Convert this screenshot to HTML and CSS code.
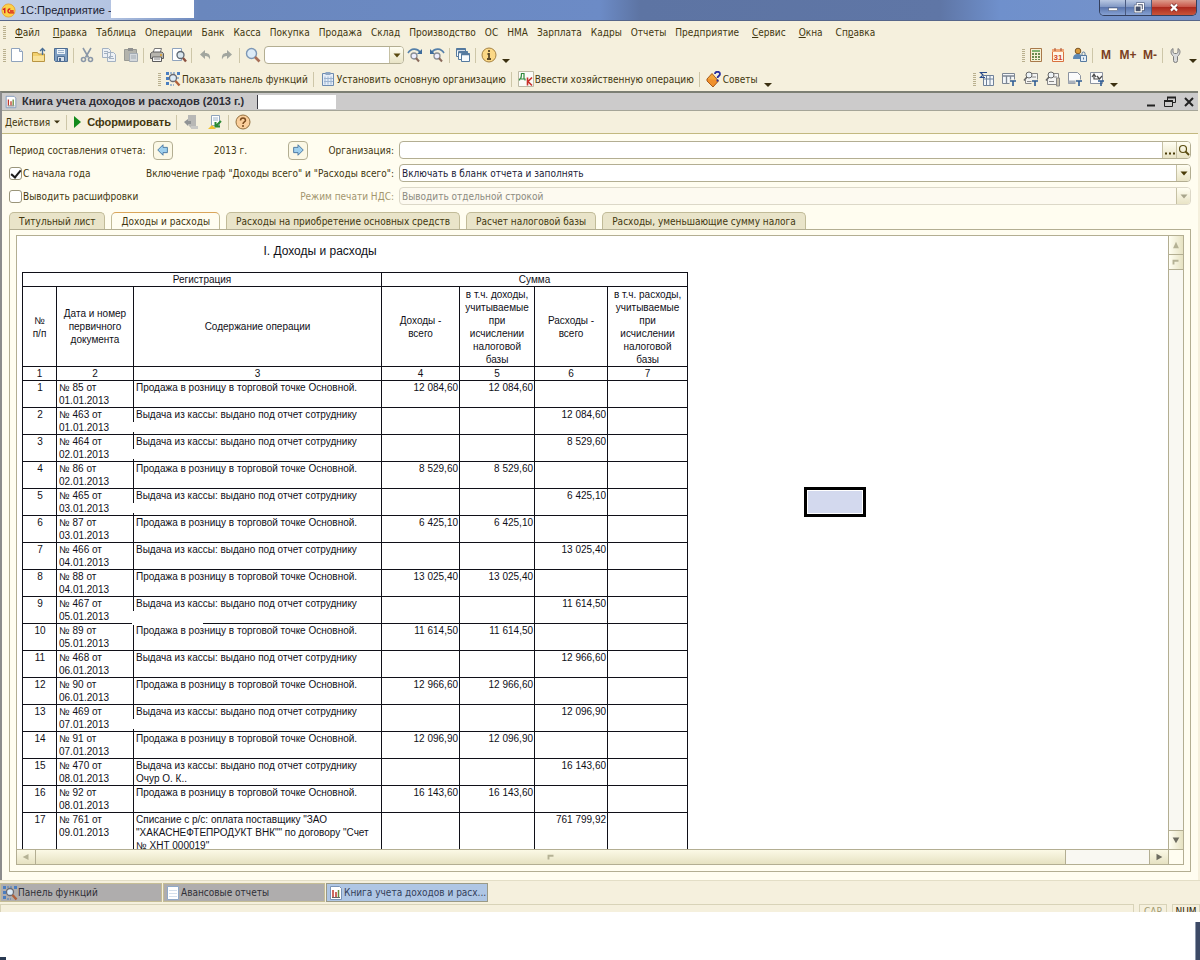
FILE: index.html
```html
<!DOCTYPE html>
<html lang="ru">
<head>
    <meta charset="UTF-8">
    <meta name="viewport" content="width=device-width, initial-scale=1.0">
    <title>1С:Предприятие</title>
    <link rel="stylesheet" href="styles.css">
</head>
<body>
    <header class="titlebar">
        <svg class="logo" viewBox="0 0 16 16"><circle cx="8" cy="8" r="7" fill="#fbd24a" stroke="#e9a53a"/><path d="M2 7l2-1v5M10 6.500a2 2 0 1 0-1 4h5M9.500 8.500h4" fill="none" stroke="#d8231c" stroke-width="1.500"/></svg>
        <h1>1С:Предприятие -</h1>
        <span class="title-blank"></span>
        <div class="window-buttons">
            <button type="button" aria-label="Свернуть"><svg viewBox="0 0 16 16"><rect x="3" y="8" width="10" height="3" fill="#fff" stroke="#44506b" stroke-width=".6"/></svg></button>
            <button type="button" aria-label="Развернуть"><svg viewBox="0 0 16 16"><path d="M6 5V3h7v7h-2M3.500 5.500h7v7h-7zM6 8h2v2H6z" fill="none" stroke="#44506b" stroke-width="2.600"/><path d="M6 5V3h7v7h-2M3.500 5.500h7v7h-7z" fill="none" stroke="#fff" stroke-width="1.400"/></svg></button>
            <button type="button" class="close" aria-label="Закрыть"><svg viewBox="0 0 16 16"><path d="M4.500 4l7 7M11.500 4l-7 7" stroke="#6b2b2b" stroke-width="4"/><path d="M4.500 4l7 7M11.500 4l-7 7" stroke="#fff" stroke-width="2.500"/></svg></button>
        </div>
    </header>

    <nav class="menu">
        <span class="grip"></span>
        <a href="#" class="wide"><u>Ф</u>айл</a>
        <a href="#"><u>П</u>равка</a>
        <a href="#">Таблица</a>
        <a href="#">Операции</a>
        <a href="#">Банк</a>
        <a href="#">Касса</a>
        <a href="#">Покупка</a>
        <a href="#">Продажа</a>
        <a href="#">Склад</a>
        <a href="#">Производство</a>
        <a href="#">ОС</a>
        <a href="#">НМА</a>
        <a href="#">Зарплата</a>
        <a href="#">Кадры</a>
        <a href="#">Отчеты</a>
        <a href="#" class="wide">Предприятие</a>
        <a href="#" class="wide"><u>С</u>ервис</a>
        <a href="#" class="wide"><u>О</u>кна</a>
        <a href="#">Сп<u>р</u>авка</a>
    </nav>

    <div class="toolbar">
        <span class="grip"></span>
        <button type="button" aria-label="Новый"><svg viewBox="0 0 16 16"><path d="M2.500 1.500h8l3 3v10h-11z" fill="#fff" stroke="#8fa3bd"/><path d="M10.500 1.500v3h3" fill="#dfe8f3" stroke="#8fa3bd"/></svg></button>
        <button type="button" aria-label="Открыть"><svg viewBox="0 0 16 16"><path d="M1.500 5.500h5l1 1.500h6v7.500h-12z" fill="#f3d16e" stroke="#b99542"/><path d="M2 9h11v5H2z" fill="#f9e29a"/><path d="M11.500 8V2M9 4l2.500-2.500L14 4" fill="none" stroke="#4a6f96" stroke-width="1.300"/></svg></button>
        <button type="button" aria-label="Сохранить"><svg viewBox="0 0 16 16"><path d="M1.500 1.500h13v13h-12l-1-1z" fill="#7f9fc2" stroke="#4d6c92"/><path d="M4 2h8v5H4z" fill="#eef4fa"/><path d="M5 3.500h6M5 5.500h6" stroke="#9db4cd"/><path d="M4.500 9.500h7v5h-7z" fill="#d5dfeb" stroke="#4d6c92"/><path d="M6 11h2v3H6z" fill="#4d6c92"/></svg></button>
        <span class="sep"></span>
        <button type="button" aria-label="Вырезать"><svg viewBox="0 0 16 16" fill="none" stroke="#8a97a8" stroke-width="1.600"><path d="M4 1l5.500 9.500M12 1L6.500 10.500"/><circle cx="4.500" cy="12.500" r="2"/><circle cx="11.500" cy="12.500" r="2"/></svg></button>
        <button type="button" aria-label="Копировать"><svg viewBox="0 0 16 16"><path d="M1.500 1.500h6l2 2v7h-8zM6.500 5.500h6l2 2v7h-8z" fill="#edf1f5" stroke="#a3b1c2"/><path d="M3 4.500h4M3 6.500h3M8 9.500h4M8 11.500h5" stroke="#a3b1c2"/></svg></button>
        <button type="button" aria-label="Вставить"><svg viewBox="0 0 16 16"><path d="M1.500 2.500h12v11h-12z" fill="#b3b3ac" stroke="#999a94"/><path d="M5 1h5v3H5z" fill="#8f9090"/><path d="M6.500 6.500h8v8h-8z" fill="#d4d8dc" stroke="#a3abb3"/><path d="M8 9h5M8 11h5" stroke="#a3abb3"/></svg></button>
        <span class="sep"></span>
        <button type="button" aria-label="Печать"><svg viewBox="0 0 16 16"><path d="M4 6l1.500-4.500h7L11 6" fill="#fff" stroke="#777"/><path d="M1.500 6.500l2-1.500h9.500l1.500 1.500v5h-13z" fill="#b7b5ae" stroke="#5c5c5c"/><path d="M3.500 10h9v4.500h-9z" fill="#f5f5f5" stroke="#5c5c5c"/><path d="M5 12h6" stroke="#888"/><path d="M11 8h2" stroke="#e3a223" stroke-width="1.500"/></svg></button>
        <button type="button" aria-label="Просмотр"><svg viewBox="0 0 16 16"><path d="M1.500 1.500h9v12h-9z" fill="#fff" stroke="#8fa3bd"/><circle cx="9.500" cy="8" r="3.500" fill="#d9e6ee" stroke="#5c6670" stroke-width="1.300"/><path d="M12 11l3 3.500" stroke="#8a5040" stroke-width="2.400"/></svg></button>
        <span class="sep"></span>
        <button type="button" aria-label="Отменить"><svg viewBox="0 0 16 16"><path d="M3 7.500L8 3v3c4 0 5.500 2 5 6.500C12 10 10.500 9 8 9v3z" fill="#a2a69f"/></svg></button>
        <button type="button" aria-label="Вернуть"><svg viewBox="0 0 16 16"><path d="M13 7.500L8 3v3c-4 0-5.500 2-5 6.500C4 10 5.500 9 8 9v3z" fill="#a2a69f"/></svg></button>
        <span class="sep"></span>
        <button type="button" aria-label="Найти"><svg viewBox="0 0 16 16"><circle cx="6.500" cy="6.500" r="5" fill="#dcebf7" stroke="#7d97b5" stroke-width="1.400"/><path d="M10 10l4.500 4.500" stroke="#a86f58" stroke-width="2.600"/></svg></button>
        <span class="field search">
            <input type="text" aria-label="Поиск">
            <button type="button" aria-label="История поиска"><svg viewBox="0 0 12 12"><path d="M2.500 4.500h7L6 8.500z" fill="#5a4a10"/></svg></button>
        </span>
        <button type="button" aria-label="Найти далее"><svg viewBox="0 0 16 16"><path d="M1 6c3-5 9-5 12-1" fill="none" stroke="#5580aa" stroke-width="1.600"/><path d="M15 2v5h-5z" fill="#3f6c9c"/><circle cx="7" cy="9" r="3" fill="#eef" stroke="#8a8f96" stroke-width="1.300"/><path d="M9 11l3 3.500" stroke="#8a6a5c" stroke-width="2"/></svg></button>
        <button type="button" aria-label="Найти ранее"><svg viewBox="0 0 16 16"><path d="M15 6C12 1 6 1 3 5" fill="none" stroke="#5580aa" stroke-width="1.600"/><path d="M1 2v5h5z" fill="#3f6c9c"/><circle cx="8" cy="9" r="3" fill="#eef" stroke="#8a8f96" stroke-width="1.300"/><path d="M10 11l3 3.500" stroke="#8a6a5c" stroke-width="2"/></svg></button>
        <span class="sep"></span>
        <button type="button" aria-label="Окна"><svg viewBox="0 0 16 16" fill="#f7fafc" stroke="#557a9f"><path d="M1.500 1.500h9v8h-9z"/><path d="M3.500 4.500h9v8h-9z"/><path d="M6.500 6.500h8v8h-8z"/><path d="M1 2.500h10M4 5.500h9M7 7.500h8" stroke-width="1.500"/></svg></button>
        <span class="sep"></span>
        <button type="button" aria-label="Справка"><svg viewBox="0 0 16 16"><circle cx="8" cy="8" r="7" fill="#fbd886" stroke="#a58242"/><path d="M8 3v2M6.500 7H8v5M6 12h4" stroke="#5c4a28" stroke-width="1.800" fill="none"/></svg></button>
        <span class="more"></span>

        <div class="group-right">
            <span class="grip"></span>
            <button type="button" aria-label="Калькулятор"><svg viewBox="0 0 16 16"><path d="M2.500 1.500h11v13h-11z" fill="#f7f0d4" stroke="#a8794a"/><path d="M4 3h8v2H4z" fill="#7fb26e"/><path d="M5 6v7M8 6v7M11 6v7" stroke="#6b8a4f" stroke-width="2" stroke-dasharray="2 1"/></svg></button>
            <button type="button" aria-label="Календарь"><svg viewBox="0 0 16 16"><path d="M2.500 2.500h11v12h-11z" fill="#fff6e6" stroke="#d9713e"/><path d="M2 2h12v3H2z" fill="#f0a878"/><path d="M5 1v3M11 1v3" stroke="#a5492b"/><text x="8" y="13" class="icon-day">31</text></svg></button>
            <button type="button" aria-label="Пользователи"><svg viewBox="0 0 16 16"><circle cx="6" cy="4" r="2.800" fill="#d99a3c" stroke="#7a5424"/><path d="M1 12c0-4 2-5 5-5s4 1 4 5z" fill="#5c88b5"/><path d="M8.500 8.500h6v6h-6z" fill="#e5eef6" stroke="#55799f"/><path d="M10 8V6.500a1.500 1.500 0 0 1 3 0V8" fill="none" stroke="#55799f"/><path d="M11.500 10.500v2" stroke="#55799f"/></svg></button>
            <span class="sep"></span>
            <button type="button" class="memory">M</button>
            <button type="button" class="memory">M+</button>
            <button type="button" class="memory">M-</button>
            <span class="sep"></span>
            <button type="button" aria-label="Настройка"><svg viewBox="0 0 16 16"><path d="M5 1.500v4l1.500 1h2l1.500-1v-4c2 1 3 4 .5 7l-1 1v4a1.500 1.500 0 0 1-4 0v-4l-1-1c-2.500-3-1.500-6 .5-7z" fill="#d9dadb" stroke="#7c7c7c"/></svg></button>
            <span class="more"></span>
        </div>
    </div>

    <div class="toolbar toolbar-commands">
        <span class="grip"></span>
        <button type="button" class="command"><svg viewBox="0 0 16 16"><path d="M1 1h3v3H1zM1 6h3v3H1zM1 11h3v3H1zM12 1h3v3h-3z" fill="#4a7ec0"/><path d="M5 2h6M5 14h4M13 6v3" stroke="#4a7ec0" stroke-dasharray="2 1"/><circle cx="8" cy="7" r="3.500" fill="#dcebf7" stroke="#6a6a72" stroke-width="1.300"/><path d="M10.500 10l4 4.500" stroke="#b0603a" stroke-width="2.400"/></svg>Показать панель функций</button>
        <span class="sep"></span>
        <button type="button" class="command"><svg viewBox="0 0 16 16"><path d="M2.500 2.500h11v12h-11z" fill="#e6eef8" stroke="#6d8bb0"/><path d="M5.500 1h5v3h-5z" fill="#8ea6c4"/><path d="M5 5.500v8M8 5.500v8M11 5.500v8M4 7.500h9M4 10.500h9" stroke="#9db4d1"/></svg>Установить основную организацию</button>
        <span class="sep"></span>
        <button type="button" class="command"><svg viewBox="0 0 16 16"><path d="M.5.500h15v15H.5z" fill="#fbfbf8" stroke="#bdb9a4"/><path d="M1.500 9.500V8h5.500v1.500M2.500 8c1-2 1-4 1-5.500h2.500V8" fill="none" stroke="#2f8a3c" stroke-width="1.200"/><path d="M9.500 6.500v8M14 6.500l-4 4 4 4" fill="none" stroke="#c8312a" stroke-width="1.600"/></svg>Ввести хозяйственную операцию</button>
        <span class="sep"></span>
        <button type="button" class="command"><svg viewBox="0 0 16 16"><path d="M1 8l5-5.500 6 7L7 15z" fill="#f2a53a" stroke="#a85a1c"/><path d="M1 8v2l6 6 5-5.500V9" fill="#f0902c" stroke="#a85a1c"/><path d="M9 3c0-3 5-3 5 0 0 2-2.500 2-2.500 4M11.500 8.500v2" fill="none" stroke="#2a2f9e" stroke-width="1.800"/></svg>Советы</button>
        <span class="more"></span>

        <div class="group-right">
            <span class="grip"></span>
            <button type="button" aria-label="Итоги"><svg viewBox="0 0 16 16"><path d="M4.500 4.500h10v10h-10z" fill="#f4f7fa" stroke="#6f8199"/><path d="M7.500 5v9M11 5v9M5 8h9" stroke="#6f8199"/><path d="M8 1.500H1.500L4 4 1.500 6.500H6" fill="none" stroke="#2b4c8a" stroke-width="1.200"/></svg></button>
            <button type="button" aria-label="Таблица"><svg viewBox="0 0 16 16"><path d="M1.500 2.500h12v10h-12z" fill="#f4f7fa" stroke="#7d8794"/><path d="M2 5h11M5.500 5v7M9.500 5v7" stroke="#7d8794" stroke-width="1.300"/><path d="M8.500 8.500h7v7h-7z" fill="#f6f1dd"/><path d="M9 10h6M12 10v5" stroke="#2f5c94" stroke-width="1.600"/></svg></button>
            <button type="button" aria-label="Поиск в таблице"><svg viewBox="0 0 16 16"><path d="M4.500 2.500h10v10h-12V9" fill="#f4f4f2" stroke="#888"/><path d="M4 10.500h6M9 6h4" stroke="#888"/><circle cx="6" cy="4" r="3" fill="#eef4f8" stroke="#666"/><path d="M4 6L1 9.500" stroke="#666" stroke-width="1.600"/><path d="M8.500 8.500h7v7h-7z" fill="#f6f1dd"/><path d="M9 10h6M12 10v5" stroke="#2f5c94" stroke-width="1.600"/></svg></button>
            <button type="button" aria-label="Поиск"><svg viewBox="0 0 16 16"><path d="M4.500 2.500h9v11h-11V9" fill="#f4f4f2" stroke="#888"/><path d="M4 10.500h5M9 6h3" stroke="#888"/><circle cx="6" cy="4" r="3" fill="#eef4f8" stroke="#666"/><path d="M4 6L1 9.500" stroke="#666" stroke-width="1.600"/><path d="M11.500 7v8h3V7z" fill="#c9c2ad" stroke="#888"/></svg></button>
            <button type="button" aria-label="Текст"><svg viewBox="0 0 16 16"><path d="M1.500 1.500h9l3 3v8h-12z" fill="#fbfbfb" stroke="#8b93a0"/><path d="M1.500 9.500h8v3h-8z" fill="#aab2bd"/><path d="M8.500 8.500h7v7h-7z" fill="#f6f1dd"/><path d="M9 10h6M12 10v5" stroke="#2f5c94" stroke-width="1.600"/></svg></button>
            <button type="button" aria-label="Обновить"><svg viewBox="0 0 16 16"><path d="M1.500 1.500h12v11h-12z" fill="#fbfbfb" stroke="#8b93a0"/><path d="M3 6l2-3 2 3M5 4v4h5M8 5l2.500 3L13 5" fill="none" stroke="#4c4c4c" stroke-width="1.200"/><path d="M9 10h6M12 10v5" stroke="#2f5c94" stroke-width="1.600"/></svg></button>
            <span class="more"></span>
        </div>
    </div>

    <main class="report">
        <div class="report-title">
            <svg class="icon" viewBox="0 0 16 16"><path d="M2.500 1.500h9l2 2v11h-11z" fill="#fff" stroke="#7a94b8"/><path d="M5 5v7M8 7v5" stroke="#c0392b" stroke-width="1.500"/><path d="M10.500 5v7" stroke="#6a8c3a" stroke-width="1.500"/><path d="M4 12.500h8" stroke="#666"/></svg>
            <h2>Книга учета доходов и расходов (2013 г.)</h2>
            <span class="org-blank"></span>
            <div class="report-buttons">
                <button type="button" aria-label="Свернуть окно"><svg viewBox="0 0 14 14"><path d="M3 10.500h8" stroke="#222" stroke-width="2"/></svg></button>
                <button type="button" aria-label="Восстановить окно"><svg viewBox="0 0 14 14" fill="none" stroke="#222"><path d="M4.500 5V2.500h8v5H10M1.500 5.500h8v6h-8z"/><path d="M4 2.500h9M1 6h9" stroke-width="2"/></svg></button>
                <button type="button" aria-label="Закрыть окно"><svg viewBox="0 0 14 14"><path d="M3 3l8 8M11 3l-8 8" stroke="#222" stroke-width="2"/></svg></button>
            </div>
        </div>

        <div class="report-actions">
            <button type="button" class="command">Действия <svg class="caret" viewBox="0 0 8 8"><path d="M1 2.500h6L4 5.500z" fill="#3b3010"/></svg></button>
            <span class="sep"></span>
            <button type="button" class="command run"><svg viewBox="0 0 16 16"><path d="M5 2l7 6-7 6z" fill="#128a1c"/></svg>Сформировать</button>
            <span class="sep"></span>
            <button type="button" aria-label="Восстановить значения"><svg viewBox="0 0 16 16"><path d="M5 1h8v13H8l-3-3z" fill="#b8b8b6"/><path d="M1 8l4-3v2h3v3H5v2z" fill="#8f9294"/><path d="M8 12h7v3H8z" fill="#c9c9c6"/></svg></button>
            <button type="button" aria-label="Сохранить значения"><svg viewBox="0 0 16 16"><path d="M4.500 1.500h8v10h-8z" fill="#fff" stroke="#8fa3bd"/><path d="M6 4h5M6 6h5" stroke="#9db4cd"/><path d="M1 15l4-4 4 4z" fill="#f1c232"/><path d="M14 7l-5 5M8.500 8v4.500H13" fill="none" stroke="#2c8a35" stroke-width="2"/></svg></button>
            <span class="sep"></span>
            <button type="button" aria-label="Справка по отчету"><svg viewBox="0 0 16 16"><circle cx="8" cy="8" r="7" fill="#fbcf9c" stroke="#94703e"/><path d="M5.500 6.500c0-3.500 5-3.500 5 0 0 1.500-2.500 1.500-2.500 3.500M8 11v2" fill="none" stroke="#7a4a1c" stroke-width="1.500"/></svg></button>
        </div>

        <form class="options">
            <div class="option-row">
                <div class="option-left">
                    <span class="period-label">Период составления отчета:</span>
                    <button type="button" class="step" aria-label="Предыдущий период"><svg viewBox="0 0 16 16"><path d="M2 8l6-6v3h5v6H8v3z" fill="#9fd0ee" stroke="#3f6f9c"/></svg></button>
                    <output class="period">2013 г.</output>
                    <button type="button" class="step" aria-label="Следующий период"><svg viewBox="0 0 16 16"><path d="M14 8L8 2v3H3v6h5v3z" fill="#9fd0ee" stroke="#3f6f9c"/></svg></button>
                    <label class="caption" for="org">Организация:</label>
                </div>
                <div class="field">
                    <input type="text" id="org">
                    <button type="button" aria-label="Выбрать"><svg viewBox="0 0 12 12"><path d="M1 9.500h2M5 9.500h2M9 9.500h2" stroke="#4a3c08" stroke-width="2"/></svg></button>
                    <button type="button" aria-label="Открыть организацию"><svg viewBox="0 0 12 12"><circle cx="5" cy="5" r="3.500" fill="none" stroke="#5a4c10" stroke-width="1.200"/><path d="M7.500 7.500L11 11" stroke="#5a4c10" stroke-width="1.800"/></svg></button>
                </div>
            </div>
            <div class="option-row">
                <div class="option-left">
                    <input type="checkbox" id="fromYearStart" checked>
                    <label for="fromYearStart">С начала года</label>
                    <label class="caption" for="totals">Включение граф "Доходы всего" и "Расходы всего":</label>
                </div>
                <div class="field">
                    <select id="totals">
                        <option>Включать в бланк отчета и заполнять</option>
                    </select>
                    <span class="arrow"><svg viewBox="0 0 12 12"><path d="M2.500 4.500h7L6 8.500z" fill="#4a3c08"/></svg></span>
                </div>
            </div>
            <div class="option-row">
                <div class="option-left">
                    <input type="checkbox" id="details">
                    <label for="details">Выводить расшифровки</label>
                    <label class="caption muted" for="vat">Режим печати НДС:</label>
                </div>
                <div class="field disabled">
                    <select id="vat" disabled>
                        <option>Выводить отдельной строкой</option>
                    </select>
                    <span class="arrow"><svg viewBox="0 0 12 12"><path d="M2.500 4.500h7L6 8.500z" fill="#a8a58c"/></svg></span>
                </div>
            </div>
        </form>

        <div class="tabs" role="tablist">
            <button type="button" role="tab">Титульный лист</button>
            <button type="button" role="tab" class="active" aria-selected="true">Доходы и расходы</button>
            <button type="button" role="tab">Расходы на приобретение основных средств</button>
            <button type="button" role="tab">Расчет налоговой базы</button>
            <button type="button" role="tab">Расходы, уменьшающие сумму налога</button>
        </div>

        <section class="panel">
            <div class="sheet-frame">
                <div class="sheet">
                    <table>
                        <caption>I. Доходы и расходы</caption>
                        <colgroup>
                            <col class="c-num"><col class="c-doc"><col class="c-text"><col class="c-income"><col class="c-income-tax"><col class="c-expense"><col class="c-expense-tax">
                        </colgroup>
                        <thead>
                            <tr><th colspan="3">Регистрация</th><th colspan="4">Сумма</th></tr>
                            <tr class="names">
                                <th>№<br>п/п</th>
                                <th>Дата и номер первичного документа</th>
                                <th>Содержание операции</th>
                                <th>Доходы -<br>всего</th>
                                <th>в т.ч. доходы, учитываемые<br>при<br>исчислении<br>налоговой<br>базы</th>
                                <th>Расходы -<br>всего</th>
                                <th>в т.ч. расходы, учитываемые<br>при<br>исчислении<br>налоговой<br>базы</th>
                            </tr>
                            <tr><th>1</th><th>2</th><th>3</th><th>4</th><th>5</th><th>6</th><th>7</th></tr>
                        </thead>
                        <tbody>
                            <tr><td>1</td><td>№ 85 от<br>01.01.2013</td><td>Продажа в розницу в торговой точке Основной.</td><td>12 084,60</td><td>12 084,60</td><td></td><td></td></tr>
                            <tr><td>2</td><td>№ 463 от<br>01.01.2013</td><td>Выдача из кассы: выдано под отчет сотруднику<span class="erased"></span></td><td></td><td></td><td>12 084,60</td><td></td></tr>
                            <tr><td>3</td><td>№ 464 от<br>02.01.2013</td><td>Выдача из кассы: выдано под отчет сотруднику<span class="erased"></span></td><td></td><td></td><td>8 529,60</td><td></td></tr>
                            <tr><td>4</td><td>№ 86 от<br>02.01.2013</td><td>Продажа в розницу в торговой точке Основной.</td><td>8 529,60</td><td>8 529,60</td><td></td><td></td></tr>
                            <tr><td>5</td><td>№ 465 от<br>03.01.2013</td><td>Выдача из кассы: выдано под отчет сотруднику<span class="erased"></span></td><td></td><td></td><td>6 425,10</td><td></td></tr>
                            <tr><td>6</td><td>№ 87 от<br>03.01.2013</td><td>Продажа в розницу в торговой точке Основной.</td><td>6 425,10</td><td>6 425,10</td><td></td><td></td></tr>
                            <tr><td>7</td><td>№ 466 от<br>04.01.2013</td><td>Выдача из кассы: выдано под отчет сотруднику</td><td></td><td></td><td>13 025,40</td><td></td></tr>
                            <tr><td>8</td><td>№ 88 от<br>04.01.2013</td><td>Продажа в розницу в торговой точке Основной.</td><td>13 025,40</td><td>13 025,40</td><td></td><td></td></tr>
                            <tr><td>9</td><td>№ 467 от<br>05.01.2013</td><td>Выдача из кассы: выдано под отчет сотруднику<span class="erased through"></span></td><td></td><td></td><td>11 614,50</td><td></td></tr>
                            <tr><td>10</td><td>№ 89 от<br>05.01.2013</td><td>Продажа в розницу в торговой точке Основной.</td><td>11 614,50</td><td>11 614,50</td><td></td><td></td></tr>
                            <tr><td>11</td><td>№ 468 от<br>06.01.2013</td><td>Выдача из кассы: выдано под отчет сотруднику</td><td></td><td></td><td>12 966,60</td><td></td></tr>
                            <tr><td>12</td><td>№ 90 от<br>06.01.2013</td><td>Продажа в розницу в торговой точке Основной.</td><td>12 966,60</td><td>12 966,60</td><td></td><td></td></tr>
                            <tr><td>13</td><td>№ 469 от<br>07.01.2013</td><td>Выдача из кассы: выдано под отчет сотруднику<span class="erased"></span></td><td></td><td></td><td>12 096,90</td><td></td></tr>
                            <tr><td>14</td><td>№ 91 от<br>07.01.2013</td><td>Продажа в розницу в торговой точке Основной.</td><td>12 096,90</td><td>12 096,90</td><td></td><td></td></tr>
                            <tr><td>15</td><td>№ 470 от<br>08.01.2013</td><td>Выдача из кассы: выдано под отчет сотруднику Очур О. К..</td><td></td><td></td><td>16 143,60</td><td></td></tr>
                            <tr><td>16</td><td>№ 92 от<br>08.01.2013</td><td>Продажа в розницу в торговой точке Основной.</td><td>16 143,60</td><td>16 143,60</td><td></td><td></td></tr>
                            <tr><td>17</td><td>№ 761 от<br>09.01.2013</td><td>Списание с р/с: оплата поставщику "ЗАО "ХАКАСНЕФТЕПРОДУКТ ВНК"" по договору "Счет № ХНТ 000019"</td><td></td><td></td><td>761 799,92</td><td></td></tr>
                        </tbody>
                    </table>
                    <div class="selected-cell"></div>
                </div>
                <div class="scroll-v">
                    <button type="button" aria-label="Вверх"><svg viewBox="0 0 12 12"><path d="M6 2l3.500 8h-7z" fill="#b5b295"/></svg></button>
                    <span class="thumb"><svg viewBox="0 0 8 8"><path d="M2 6V3h4" fill="none" stroke="#b5b295" stroke-width="1.500"/></svg></span>
                    <button type="button" class="last" aria-label="Вниз"><svg viewBox="0 0 12 12"><path d="M2 3h8l-4 7z" fill="#6d6c60"/></svg></button>
                </div>
                <div class="scroll-h">
                    <button type="button" aria-label="Влево"><svg viewBox="0 0 12 12"><path d="M2 6l7-3.500v7z" fill="#b5b295"/></svg></button>
                    <span class="thumb"><svg viewBox="0 0 8 8"><path d="M2 6V3h4" fill="none" stroke="#b5b295" stroke-width="1.500"/></svg></span>
                    <button type="button" class="last" aria-label="Вправо"><svg viewBox="0 0 12 12"><path d="M3 2l7 4-7 4z" fill="#6d6c60"/></svg></button>
                </div>
                <div class="scroll-corner"></div>
            </div>
        </section>
    </main>

    <nav class="window-list">
        <button type="button"><svg viewBox="0 0 16 16"><path d="M1 1h3v3H1zM1 6h3v3H1zM1 11h3v3H1zM12 1h3v3h-3z" fill="#4a7ec0"/><path d="M5 2h6M5 14h4" stroke="#4a7ec0" stroke-dasharray="2 1"/><circle cx="8" cy="7" r="3.500" fill="#dcebf7" stroke="#6a6a72" stroke-width="1.300"/><path d="M10.500 10l4 4.500" stroke="#b0603a" stroke-width="2.400"/></svg>Панель функций</button>
        <button type="button"><svg viewBox="0 0 16 16"><path d="M2.500 1.500h11v13h-11z" fill="#fff" stroke="#8fa9c9"/><path d="M4 5.500h8M4 8.500h8M4 11.500h8" stroke="#d3dfec"/></svg>Авансовые отчеты</button>
        <button type="button" class="active"><svg viewBox="0 0 16 16"><path d="M2.500 1.500h9l2 2v11h-11z" fill="#fff" stroke="#7a94b8"/><path d="M5 5v7M8 7v5" stroke="#c0392b" stroke-width="1.500"/><path d="M10.500 5v7" stroke="#6a8c3a" stroke-width="1.500"/><path d="M4 12.500h8" stroke="#666"/></svg>Книга учета доходов и расх...</button>
    </nav>

    <footer class="status">
        <span class="hint"></span>
        <span class="lock off">CAP</span>
        <span class="lock">NUM</span>
    </footer>
    <div class="below"><span class="edge-left"></span><span class="edge-right"></span></div>
</body>
</html>
```
FILE: styles.css
```css
/* Basic Reset */
* {
    margin: 0;
    padding: 0;
    box-sizing: border-box;
}
body {
    display: flex;
    flex-direction: column;
    height: 100vh;
    overflow: hidden;
    font-family: "DejaVu Sans Condensed", "Liberation Sans", Arial, sans-serif;
    font-size: 10px;
    line-height: 13px;
    color: #42370f;
    background: #f5f0dd;
}
button, input, select {
    font: inherit;
    color: inherit;
    border: none;
    background: none;
}
button {
    display: flex;
    align-items: center;
    justify-content: center;
    cursor: pointer;
    white-space: nowrap;
}
a {
    color: inherit;
    text-decoration: none;
}
svg {
    display: block;
    width: 16px;
    height: 16px;
    flex: none;
}

/* Main window title */
.titlebar {
    display: flex;
    align-items: center;
    flex: none;
    height: 21px;
    border-bottom: 1px solid #56668a;
    background: linear-gradient(to right, #c3d0e6 0, #b4c4e2 110px, #6a87bd 200px, #6c8bc6 600px, #5d74a3 640px, #5f76a6 940px, #6f90cc 1000px, #7793c9 100%);
}
.logo {
    width: 15px;
    height: 15px;
    margin-left: 1px;
}
.titlebar h1 {
    width: 95px;
    padding-left: 4px;
    font: 11px/18px "Liberation Sans", Arial, sans-serif;
    color: #1b2233;
    white-space: nowrap;
}
.title-blank {
    align-self: flex-start;
    width: 83px;
    height: 18px;
    background: #fff;
}
.window-buttons {
    display: flex;
    align-self: flex-start;
    margin-left: auto;
    margin-right: 3px;
    border: 1px solid #34405e;
    border-top: none;
    border-radius: 0 0 5px 5px;
    overflow: hidden;
}
.window-buttons button {
    width: 26px;
    height: 15px;
    border-right: 1px solid #4a5a80;
    background: linear-gradient(#b9c8e2, #8299c5 45%, #5b76ad 50%, #86a1d3);
}
.window-buttons button.close {
    width: 44px;
    border-right: none;
    background: linear-gradient(#dd9c8c, #c9574a 45%, #ac2a1e 50%, #c9543a);
}
.window-buttons svg {
    width: 14px;
    height: 14px;
}

/* Menu and toolbars */
.menu {
    display: flex;
    align-items: center;
    gap: 9px;
    flex: none;
    height: 22px;
    padding-left: 3px;
    white-space: nowrap;
}
.menu .wide {
    margin-right: 4px;
}
.grip {
    flex: none;
    width: 3px;
    height: 13px;
    background: repeating-linear-gradient(#b9b08e 0 1px, transparent 1px 2px);
}
.toolbar {
    display: flex;
    align-items: center;
    flex: none;
    height: 24px;
    padding: 0 2px 0 3px;
}
.toolbar button {
    width: 22px;
    height: 20px;
}
.toolbar .command {
    width: auto;
    gap: 1px;
    padding: 0 4px;
}
.sep {
    flex: none;
    width: 1px;
    height: 15px;
    margin: 0 2px 0 1px;
    background: #cdc6a8;
}
.more {
    width: 11px;
    height: 13px;
}
.more::after {
    content: "";
    display: block;
    margin: 10px 2px 0;
    border: 4px solid transparent;
    border-top-color: #3b3010;
    border-bottom: none;
}
.group-right {
    display: flex;
    align-items: center;
    margin-left: auto;
}
.toolbar-commands {
    padding-left: 158px;
    padding-right: 81px;
}
.toolbar .memory {
    font: bold 12px/13px "Liberation Sans", Arial, sans-serif;
    color: #7a3f22;
}
.icon-day {
    font: bold 8px "Liberation Sans", Arial, sans-serif;
    text-anchor: middle;
    fill: #d1481f;
}

/* Text boxes and drop-downs */
.field {
    display: flex;
    flex: 1;
    min-width: 0;
    height: 18px;
    border: 1px solid #b3ae92;
    border-radius: 4px;
    background: #fff;
    overflow: hidden;
}
.field input, .field select {
    flex: 1;
    min-width: 0;
    padding: 0 2px;
    color: #1b1b38;
    appearance: none;
    outline: none;
}
.field button, .field .arrow {
    display: flex;
    align-items: center;
    justify-content: center;
    flex: none;
    width: 14px;
    height: 16px;
    border-left: 1px solid #c6c1a4;
    background: linear-gradient(#fffef2, #e9e4c6);
}
.field svg {
    width: 12px;
    height: 12px;
}
.field.disabled {
    border-color: #dcd8c8;
    background: #fdfaf0;
}
.field.disabled select {
    color: #8c8a80;
    opacity: 1;
}
.field.search {
    flex: none;
    width: 140px;
}

/* Report window */
.report {
    display: flex;
    flex-direction: column;
    flex: 1;
    min-height: 0;
    margin-right: 2px;
    border-top: 2px solid #7c7f74;
    border-left: 2px solid #8c8c8c;
    background: #fffdf0;
}
.report-title {
    display: flex;
    align-items: center;
    flex: none;
    height: 18px;
    padding: 0 2px;
    border-bottom: 1px solid #a5a598;
    background: #cccbcb;
}
.report-title .icon {
    width: 14px;
    height: 14px;
    margin-right: 4px;
}
.report-title h2 {
    font: bold 11px/13px "Liberation Sans", Arial, sans-serif;
    color: #2d2d35;
    white-space: nowrap;
}
.org-blank {
    width: 79px;
    height: 14px;
    margin-left: 13px;
    border-left: 1px solid #3c3c44;
    background: #fff;
}
.report-buttons {
    display: flex;
    gap: 5px;
    margin-left: auto;
}
.report-buttons svg {
    width: 14px;
    height: 14px;
}
.report-actions {
    display: flex;
    align-items: center;
    flex: none;
    height: 23px;
    padding-left: 3px;
    border-bottom: 1px solid #c3b97f;
    background: #f5f0dd;
}
.report-actions button {
    width: 24px;
}
.report-actions .command {
    width: auto;
    padding-right: 4px;
}
.caret {
    width: 8px;
    height: 8px;
    margin-left: 3px;
}
.report-actions .run {
    gap: 2px;
    font: bold 11px/13px "Liberation Sans", Arial, sans-serif;
}

/* Report options */
.options {
    display: flex;
    flex-direction: column;
    flex: none;
    gap: 5px;
    padding: 7px;
}
.option-row {
    display: flex;
    align-items: center;
    height: 18px;
}
.option-left {
    display: flex;
    align-items: center;
    flex: none;
    width: 390px;
    white-space: nowrap;
}
.caption {
    margin-left: auto;
    padding-right: 5px;
}
.muted {
    color: #a3966f;
}
.period-label {
    width: 144px;
}
.step {
    width: 20px;
    height: 19px;
    border: 1px solid #b3ae92;
    border-radius: 4px;
    background: #fbf8e6;
}
.step svg {
    width: 14px;
    height: 14px;
}
.period {
    width: 115px;
    text-align: center;
}
input[type="checkbox"] {
    display: grid;
    place-items: center;
    width: 13px;
    height: 13px;
    margin-right: 1px;
    border: 1px solid #9a957a;
    border-radius: 3px;
    background: #fff;
    appearance: none;
}
input[type="checkbox"]:checked::after {
    content: "";
    width: 4px;
    height: 8px;
    border: solid #1c1c1c;
    border-width: 0 2px 2px 0;
    transform: rotate(40deg);
}

/* Tabs */
.tabs {
    display: flex;
    align-items: flex-end;
    flex: none;
    gap: 6px;
    padding: 0 7px;
}
.tabs button {
    height: 17px;
    padding: 0 9px;
    border: 1px solid #c1bb98;
    border-bottom: none;
    border-radius: 5px 5px 0 0;
    background: #e9e4c9;
}
.tabs .active {
    height: 18px;
    margin-bottom: -1px;
    border-top-color: #d9a55a;
    background: #fffdf0;
}
.panel {
    display: flex;
    flex: 1;
    min-height: 0;
    margin: 0 7px 8px;
    padding: 5px 6px 6px;
    border: 1px solid #b3ae92;
}
.sheet-frame {
    display: grid;
    grid-template-columns: 1fr 15px;
    grid-template-rows: minmax(0, 1fr) 15px;
    flex: 1;
    min-width: 0;
    border: 1px solid #b3ae92;
    background: #fff;
}
.sheet {
    position: relative;
    overflow: hidden;
    padding: 7px 5px;
    background: #fff;
}

/* Income and expense table */
table {
    width: 665px;
    table-layout: fixed;
    border-collapse: collapse;
    font-family: "Liberation Sans", Arial, sans-serif;
    font-size: 10px;
    color: #101018;
}
caption {
    padding: 1px 70px 14px 0;
    font-size: 12px;
    line-height: 14px;
}
.c-num { width: 34px; }
.c-doc { width: 77px; }
.c-text { width: 248px; }
.c-income { width: 78px; }
.c-income-tax { width: 75px; }
.c-expense { width: 73px; }
.c-expense-tax { width: 80px; }
th, td {
    border: 1px solid #101018;
}
th {
    font-weight: normal;
    text-align: center;
    vertical-align: middle;
}
.names th {
    height: 80px;
    padding: 0 1px;
}
td {
    position: relative;
    padding: 0 1px 0 2px;
    text-align: right;
    vertical-align: top;
}
td:first-child {
    text-align: center;
}
td:nth-child(2), td:nth-child(3) {
    text-align: left;
}
.erased {
    position: absolute;
    left: -2px;
    bottom: 2px;
    width: 60px;
    height: 10px;
    background: #fff;
}
.erased.through {
    bottom: -2px;
    width: 71px;
    height: 14px;
}
.selected-cell {
    position: absolute;
    left: 787px;
    top: 251px;
    width: 62px;
    height: 30px;
    border: 3px solid #000;
    background: #d3d9ee;
    box-shadow: inset 0 0 0 1px #fff;
}

/* Scroll bars */
.scroll-v, .scroll-h {
    display: flex;
    background: #f9f8f2;
}
.scroll-v {
    flex-direction: column;
    border-left: 1px solid #b3ae92;
}
.scroll-h {
    border-top: 1px solid #b3ae92;
}
.scroll-v button, .scroll-v .thumb {
    height: 19px;
    border-bottom: 1px solid #b3ae92;
    background: linear-gradient(to right, #fffef2, #e6e2c2);
}
.scroll-v .thumb {
    height: 15px;
}
.scroll-h button, .scroll-h .thumb {
    width: 19px;
    border-right: 1px solid #b3ae92;
    background: linear-gradient(#fbf9e6, #e6e2c2);
}
.scroll-h .thumb {
    width: calc(100% - 121px);
}
.thumb {
    display: flex;
    align-items: center;
    justify-content: center;
}
.scroll-v svg, .scroll-h svg {
    width: 10px;
    height: 10px;
}
.scroll-v .last {
    margin-top: auto;
    border-top: 1px solid #b3ae92;
    border-bottom: none;
}
.scroll-h .last {
    margin-left: auto;
    border-left: 1px solid #b3ae92;
    border-right: none;
}
.scroll-corner {
    border-top: 1px solid #b3ae92;
    border-left: 1px solid #b3ae92;
    background: #fffdf0;
}

/* Open windows */
.window-list {
    display: flex;
    align-items: center;
    flex: none;
    gap: 1px;
    height: 24px;
    border-top: 1px solid #e3dec6;
}
.window-list button {
    justify-content: flex-start;
    width: 162px;
    height: 19px;
    padding-left: 1px;
    border: 1px solid #c5bd95;
    background: #afadad;
    color: #2f3038;
}
.window-list .active {
    background: #afc6e4;
    border-color: #9a9a86;
    color: #33405a;
}

/* Status line */
.status {
    display: flex;
    flex: none;
    gap: 5px;
    height: 8px;
    overflow: hidden;
}
.status span {
    height: 16px;
    border: 1px solid #d8d3b8;
}
.hint {
    flex: 1;
}
.lock {
    width: 28px;
    text-align: center;
    color: #2d2508;
}
.status .off {
    color: #a39c74;
}
.below {
    display: flex;
    justify-content: space-between;
    align-items: flex-end;
    flex: none;
    height: 48px;
    background: #fff;
}
.edge-left {
    width: 6px;
    height: 3px;
    background: #2a3a52;
}
.edge-right {
    width: 5px;
    height: 38px;
    border-left: 1px solid #8c98ac;
    background: #3d4a66;
}
```
